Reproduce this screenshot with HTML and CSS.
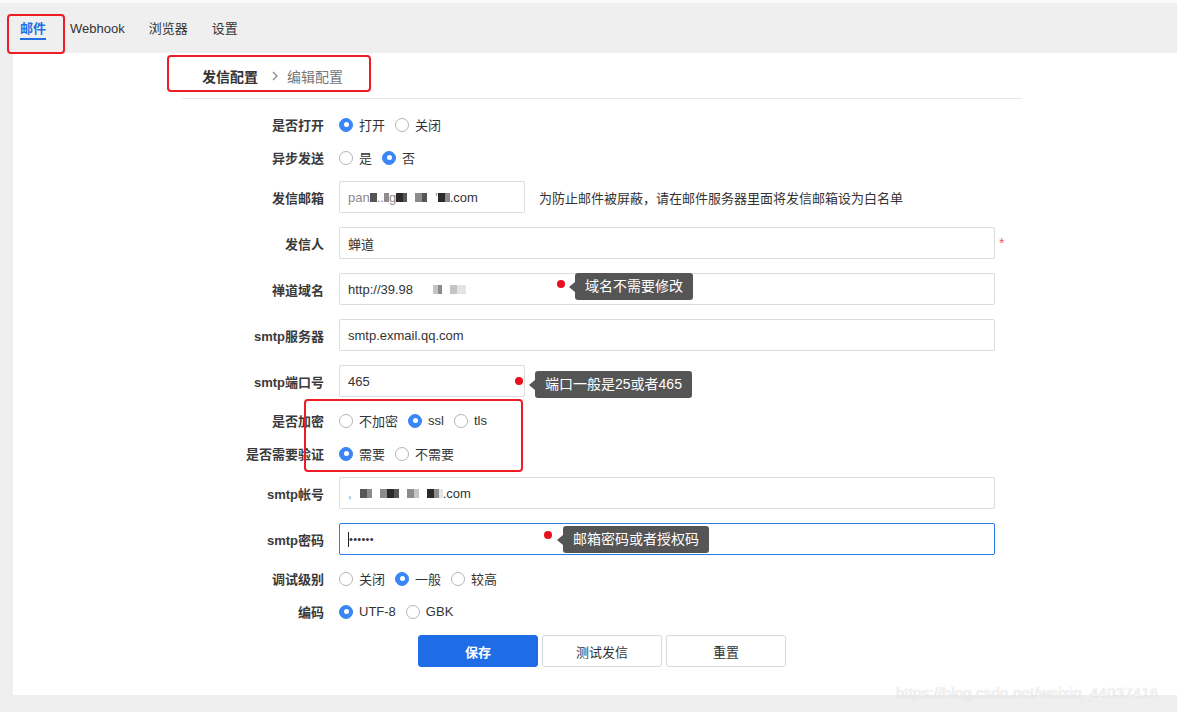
FILE: index.html
```html
<!DOCTYPE html>
<html lang="zh-CN">
<head>
<meta charset="utf-8">
<title>邮件配置</title>
<link rel="stylesheet" href="styles.css">
</head>
<body>
<header class="topbar">
  <nav class="tabs">
    <a class="tab active">邮件</a>
    <a class="tab">Webhook</a>
    <a class="tab">浏览器</a>
    <a class="tab">设置</a>
  </nav>
</header>

<main class="card">
  <div class="content">
    <div class="crumbs">
      <span class="crumb-main">发信配置</span>
      <svg class="crumb-sep" width="8" height="10" viewBox="0 0 8 10"><path d="M2 1l4 4-4 4" fill="none" stroke="#8a8a8a" stroke-width="1.3"/></svg>
      <span class="crumb-sub">编辑配置</span>
    </div>

    <form class="form">
      <div class="row radio-row">
        <label class="lbl">是否打开</label>
        <div class="ctrl">
          <span class="radio on"></span><span class="opt">打开</span>
          <span class="radio"></span><span class="opt">关闭</span>
        </div>
      </div>
      <div class="row radio-row">
        <label class="lbl">异步发送</label>
        <div class="ctrl">
          <span class="radio"></span><span class="opt">是</span>
          <span class="radio on"></span><span class="opt">否</span>
        </div>
      </div>
      <div class="row input-row">
        <label class="lbl">发信邮箱</label>
        <div class="ctrl">
          <div class="input short"><span class="ghost">pan</span><span class="px g2"></span><span class="ghost">..</span><span class="px g3 w5"></span><span class="ghost">g</span><span class="px g1"></span><span class="px g2 w4"></span><span class="gapx"></span><span class="px g3"></span><span class="px g2 w5"></span><span class="gapx"></span><span class="ghost">'</span><span class="px g1"></span><span class="px g3 w5"></span>.com</div>
          <span class="hint">为防止邮件被屏蔽，请在邮件服务器里面将发信邮箱设为白名单</span>
        </div>
      </div>
      <div class="row input-row">
        <label class="lbl">发信人</label>
        <div class="ctrl">
          <div class="input">蝉道</div>
          <span class="star">*</span>
        </div>
      </div>
      <div class="row input-row">
        <label class="lbl">禅道域名</label>
        <div class="ctrl">
          <div class="input field">http://39.98<span class="gapx wide"></span><span class="px g4 w5"></span><span class="px g3 w4"></span><span class="gapx"></span><span class="px g4"></span><span class="px g5 w5"></span><span class="px g5 w4"></span>
            <span class="dot dot-a"></span>
            <span class="tip tip-a">域名不需要修改</span>
          </div>
        </div>
      </div>
      <div class="row input-row">
        <label class="lbl">smtp服务器</label>
        <div class="ctrl">
          <div class="input">smtp.exmail.qq.com</div>
        </div>
      </div>
      <div class="row input-row">
        <label class="lbl">smtp端口号</label>
        <div class="ctrl">
          <div class="input short field">465
            <span class="dot dot-b"></span>
            <span class="tip tip-b">端口一般是25或者465</span>
          </div>
        </div>
      </div>
      <div class="row radio-row">
        <label class="lbl">是否加密</label>
        <div class="ctrl">
          <span class="radio"></span><span class="opt">不加密</span>
          <span class="radio on"></span><span class="opt">ssl</span>
          <span class="radio"></span><span class="opt">tls</span>
        </div>
      </div>
      <div class="row radio-row">
        <label class="lbl">是否需要验证</label>
        <div class="ctrl">
          <span class="radio on"></span><span class="opt">需要</span>
          <span class="radio"></span><span class="opt">不需要</span>
        </div>
      </div>
      <div class="row input-row">
        <label class="lbl">smtp帐号</label>
        <div class="ctrl">
          <div class="input"><span class="ghost">,</span><span class="gapx"></span><span class="px g2"></span><span class="px g3 w5"></span><span class="gapx"></span><span class="px g3"></span><span class="px g1"></span><span class="px g2 w5"></span><span class="gapx"></span><span class="px g3"></span><span class="px g4 w5"></span><span class="gapx"></span><span class="px g1"></span><span class="px g3 w5"></span><span class="px g5 w4"></span>.com</div>
        </div>
      </div>
      <div class="row input-row">
        <label class="lbl">smtp密码</label>
        <div class="ctrl">
          <div class="input focus field"><span class="caret"></span><span class="pw">••••••</span>
            <span class="dot dot-c"></span>
            <span class="tip tip-c">邮箱密码或者授权码</span>
          </div>
        </div>
      </div>
      <div class="row radio-row">
        <label class="lbl">调试级别</label>
        <div class="ctrl">
          <span class="radio"></span><span class="opt">关闭</span>
          <span class="radio on"></span><span class="opt">一般</span>
          <span class="radio"></span><span class="opt">较高</span>
        </div>
      </div>
      <div class="row radio-row">
        <label class="lbl">编码</label>
        <div class="ctrl">
          <span class="radio on"></span><span class="opt">UTF-8</span>
          <span class="radio"></span><span class="opt">GBK</span>
        </div>
      </div>
      <div class="row input-row">
        <span class="lbl"></span>
        <div class="ctrl buttons">
          <button type="button" class="btn primary">保存</button>
          <button type="button" class="btn">测试发信</button>
          <button type="button" class="btn">重置</button>
        </div>
      </div>
    </form>
  </div>
</main>

<div class="mark mark-tab"></div>
<div class="mark mark-crumb"></div>
<div class="mark mark-enc"></div>
<div class="watermark">https://blog.csdn.net/weixin_44037416</div>
</body>
</html>
```

FILE: styles.css
```css
* { box-sizing: border-box; }

html, body {
  margin: 0;
  padding: 0;
}

body {
  background: #efefef;
  font-family: "Liberation Sans", "Noto Sans CJK SC", sans-serif;
  font-size: 13px;
  color: #333;
  height: 712px;
  overflow: hidden;
}

/* top bar */
.topbar {
  height: 53px;
  border-top: 3px solid #fafafa;
  background: #efefef;
}

.tabs {
  display: flex;
  gap: 24px;
  padding-left: 20px;
}

.tab {
  display: block;
  padding-top: 18px;
  line-height: 16px;
  padding-bottom: 1px;
  border-bottom: 2px solid transparent;
  color: #333;
  font-size: 13px;
}

.tab.active {
  color: #1f6fe5;
  font-weight: 700;
  border-bottom-color: #1f6fe5;
}

/* card */
.card {
  margin-left: 13px;
  background: #fff;
  height: 642px;
}

.content {
  width: 840px;
  margin-left: 169px;
}

.crumbs {
  height: 46px;
  padding-left: 20px;
  border-bottom: 1px solid #e6e6e6;
  font-size: 14px;
  display: flex;
  align-items: center;
}

.crumb-main {
  font-weight: 700;
  color: #333;
}

.crumb-sep {
  margin: 0 8px 0 13px;
}

.crumb-sub {
  color: #777;
}

/* form */
.form {
  padding-top: 9px;
}

.row {
  display: flex;
  align-items: center;
}

.radio-row { height: 33px; }
.input-row { height: 46px; }

.lbl {
  width: 142px;
  flex: none;
  text-align: right;
  font-weight: 700;
  color: #3a3a3a;
}

.ctrl {
  margin-left: 15px;
  display: flex;
  align-items: center;
  flex: 1;
}

.radio {
  width: 14px;
  height: 14px;
  border-radius: 50%;
  border: 1px solid #b5b5b5;
  background: #fff;
  flex: none;
  position: relative;
}

.radio.on {
  border-color: #3a86f5;
  background: #3a86f5;
}

.radio.on::after {
  content: "";
  position: absolute;
  width: 5px;
  height: 5px;
  left: 3.5px;
  top: 3.5px;
  border-radius: 50%;
  background: #fff;
}

.opt {
  margin-left: 6px;
  margin-right: 10px;
  color: #333;
}

.input {
  width: 656px;
  height: 32px;
  border: 1px solid #dcdcdc;
  border-radius: 2px;
  padding-left: 8px;
  display: flex;
  align-items: center;
  color: #333;
  flex: none;
}

.input.short { width: 186px; }

.input.focus {
  border-color: #2f7be6;
}

.field { position: relative; }

.hint {
  margin-left: 14px;
  color: #333;
}

.star {
  color: #f15b5b;
  margin-left: 4px;
  font-size: 14px;
}

.ghost { color: #8a8a8a; }

.px {
  display: inline-block;
  width: 7px;
  height: 9px;
}
.px.w5 { width: 5px; }
.px.w4 { width: 4px; }
.g1 { background: #2b2b2b; }
.g2 { background: #555; }
.g3 { background: #8c8c8c; }
.g4 { background: #c4c4c4; }
.g5 { background: #e4e4e4; }

.gapx { display: inline-block; width: 8px; }
.gapx.wide { width: 20px; }

.caret {
  display: inline-block;
  width: 1px;
  height: 15px;
  background: #222;
}

.pw {
  font-size: 11px;
  letter-spacing: 0.3px;
  color: #333;
}

/* tooltips */
.dot {
  position: absolute;
  width: 8px;
  height: 8px;
  border-radius: 50%;
  background: #e8101e;
}

.tip {
  position: absolute;
  height: 27px;
  line-height: 27px;
  padding: 0 10px;
  background: #555;
  color: #fff;
  font-size: 14px;
  border-radius: 3px;
  white-space: nowrap;
}

.tip::before {
  content: "";
  position: absolute;
  left: -6px;
  top: 50%;
  margin-top: -5px;
  border-top: 5px solid transparent;
  border-bottom: 5px solid transparent;
  border-right: 6px solid #555;
}

.dot-a { left: 217px; top: 6px; }
.tip-a { left: 235px; top: -1px; }

.dot-b { left: 175px; top: 11px; }
.tip-b { left: 195px; top: 5px; }

.dot-c { left: 204px; top: 7px; }
.tip-c { left: 223px; top: 2px; }

/* buttons */
.buttons {
  gap: 4px;
  padding-left: 79px;
}

.btn {
  width: 120px;
  height: 32px;
  border: 1px solid #d5d9e0;
  border-radius: 3px;
  background: #fff;
  color: #333;
  font-family: inherit;
  font-size: 13px;
  padding: 0;
}

.btn.primary {
  background: #1e6de6;
  border-color: #1e6de6;
  color: #fff;
  font-weight: 700;
}

/* annotation marks */
.mark {
  position: absolute;
  border: 2px solid #ee1c25;
  border-radius: 4px;
}

.mark-tab { left: 7px; top: 14px; width: 58px; height: 40px; }
.mark-crumb { left: 167px; top: 55px; width: 204px; height: 37px; }
.mark-enc { left: 304px; top: 399px; width: 219px; height: 73px; }

.watermark {
  position: absolute;
  left: 896px;
  top: 684px;
  font-size: 15px;
  color: rgba(255, 255, 255, 0.85);
  text-shadow: 0 0 1px rgba(0, 0, 0, 0.25);
  letter-spacing: 0.2px;
}
```
